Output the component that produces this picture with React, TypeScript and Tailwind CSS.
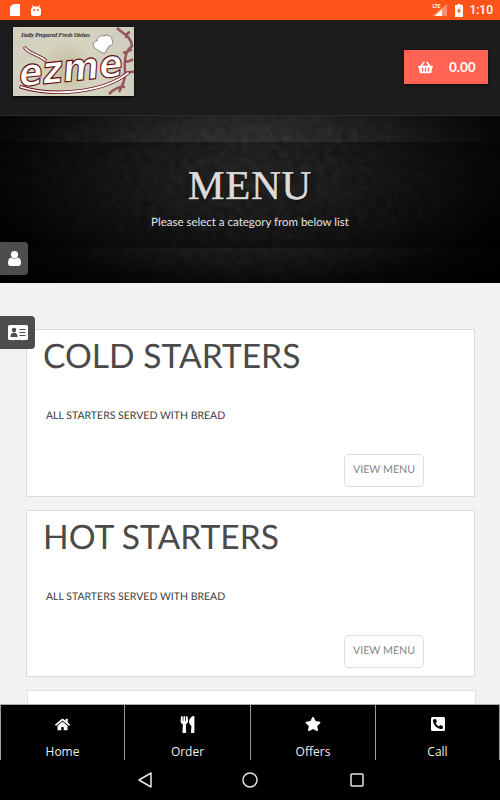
import { FaHome, FaPhoneSquareAlt, FaShoppingBasket, FaStar, FaUtensils } from 'react-icons/fa'
import type { IconType } from 'react-icons'

const navItems: { label: string; icon: IconType; size: string }[] = [
  { label: 'Home', icon: FaHome, size: 'text-[15px]' },
  { label: 'Order', icon: FaUtensils, size: 'text-[17px]' },
  { label: 'Offers', icon: FaStar, size: 'text-[16px]' },
  { label: 'Call', icon: FaPhoneSquareAlt, size: 'text-[16px]' },
]

function StatusBar() {
  return (
    <div className="h-5 shrink-0 bg-[#ff5419] flex items-center justify-between pl-[10px] pr-[7px] text-white">
      <div className="flex items-center gap-[11px]">
        <svg width="10" height="12" viewBox="0 0 10 12" fill="white">
          <path d="M3 0h6a1 1 0 0 1 1 1v10a1 1 0 0 1-1 1H1a1 1 0 0 1-1-1V3z" />
        </svg>
        <svg width="10" height="11" viewBox="0 0 10 11" fill="white">
          <path d="M1.500 0l1.300 1.500h4.400L8.500 0l.6.5L8 2c1.300.7 2 1.700 2 3v3.500A2.500 2.500 0 0 1 7.500 11h-5A2.500 2.500 0 0 1 0 8.500V5c0-1.300.7-2.300 2-3L.9.500z" />
          <circle cx="3.200" cy="5" r="1" fill="#ff5419" />
          <circle cx="6.800" cy="5" r="1" fill="#ff5419" />
        </svg>
      </div>
      <div className="flex items-center">
        <div className="relative w-[15px] h-[12px] mr-[8px]">
          <svg className="absolute inset-0" width="15" height="12" viewBox="0 0 15 12">
            <path d="M15 0v12H0z" fill="white" fillOpacity="0.35" />
            <path d="M10 5v7H3z" fill="white" />
          </svg>
          <span className="absolute left-0 top-[-1px] font-['Roboto',sans-serif] text-[5px] font-bold leading-[7px]">LTE</span>
        </div>
        <svg width="8" height="13" viewBox="0 0 8 13" className="mr-[6px]">
          <path d="M2.500 0h3v1H8v12H0V1h2.500z" fill="white" />
          <path d="M4.800 3L2 7.500h1.700L3.200 10.500 6 6H4.300z" fill="#ff5419" />
        </svg>
        <span className="font-['Roboto',sans-serif] text-[12px] font-medium leading-none">1:10</span>
      </div>
    </div>
  )
}

function Logo() {
  return (
    <div className="relative w-[121px] h-[69px] overflow-hidden bg-[radial-gradient(circle_at_45%_60%,#c2bb98_0%,#d5d2c0_35%,#cfcdbd_100%)] shadow-[0_1px_2px_rgba(0,0,0,0.8)]">
      <svg className="absolute inset-0" width="121" height="69" viewBox="0 0 121 69" fill="none">
        <path d="M104 1c6 6 14 8 15 18-6 4-8 12-7 24 1 8-2 14-6 22M117 5c-3 1-4 3-4 6M110 26c4-1 6-3 9-3M110 48c4-3 7-4 11-3M96 67c5-5 10-8 16-7M112 34c3 1 6 0 8-2" stroke="#96565b" strokeWidth="2.500" />
        <path d="M82 21c-3-2-2-7 2-7 0-4 4-6 7-5 3-2 8 0 8 4 2 3 0 6-3 6l-4 7c-2 1-8-3-10-5z" fill="white" stroke="#6e6e6e" strokeWidth="0.800" />
        <path d="M12 21c5 6 12 6 20 12" stroke="#6b1117" strokeWidth="3.500" strokeLinecap="round" />
        <path d="M12 21c5 6 12 6 20 12" stroke="white" strokeWidth="1.800" strokeLinecap="round" />
        <path d="M8 60C40 70 90 66 115 46" stroke="#6b1117" strokeWidth="3.500" strokeLinecap="round" />
        <path d="M8 60C40 70 90 66 115 46" stroke="white" strokeWidth="1.800" strokeLinecap="round" />
        <text x="6" y="54" fontFamily="'DejaVu Sans', sans-serif" fontStyle="italic" fontWeight="700" fontSize="38" fill="white" stroke="#6b1117" strokeWidth="1.200" textLength="104" lengthAdjust="spacingAndGlyphs" transform="rotate(-6 60 45)">ezme</text>
        <text x="8" y="10" fontFamily="'Liberation Serif', serif" fontStyle="italic" fontWeight="700" fontSize="6.500" fill="#333" textLength="69">Daily Prepared Fresh Dishes</text>
      </svg>
    </div>
  )
}

function Header() {
  return (
    <div className="h-[96px] shrink-0 bg-[#1c1c1c] border-b border-[#2c2c2c] flex justify-between pl-[13px] pr-[12px]">
      <div className="pt-[7px]">
        <Logo />
      </div>
      <div className="pt-[30px]">
        <div className="w-[84px] h-[34px] bg-[#ff6353] flex items-center pl-[14px] text-white shadow-[0_1px_2px_rgba(0,0,0,0.6)]">
          <FaShoppingBasket className="text-[15px]" />
          <span className="ml-[16px] font-['Lato',sans-serif] text-[13.500px] font-bold">0.00</span>
        </div>
      </div>
    </div>
  )
}

function Hero() {
  return (
    <div className="relative h-[167px] shrink-0 bg-[radial-gradient(ellipse_at_50%_30%,#2b2b2b_0%,#171717_42%,#040404_80%,#000_100%)] flex items-center overflow-hidden">
      <svg className="absolute inset-0 opacity-20 [mask-image:radial-gradient(ellipse_at_50%_40%,black_20%,transparent_75%)]" width="500" height="167">
        <filter id="grain">
          <feTurbulence type="fractalNoise" baseFrequency="0.12" numOctaves="4" />
          <feColorMatrix type="saturate" values="0" />
        </filter>
        <rect width="500" height="167" filter="url(#grain)" />
      </svg>
      <div className="relative w-full h-[106px] mt-[-9px] bg-black/40 text-center pt-[20px] [text-rendering:geometricPrecision]">
        <h1 className="font-['Liberation_Serif',serif] text-[41px] leading-[46px] text-[#dcdcdc] font-normal tracking-[0.8px] [-webkit-text-stroke:0.5px_#dcdcdc] [text-shadow:1px_1px_1px_#000]">MENU</h1>
        <p className="font-['Lato',sans-serif] text-[11.500px] leading-[18px] mt-[6px] text-[#e4e4e4]">Please select a category from below list</p>
      </div>
    </div>
  )
}

function MenuCard({ title }: { title: string }) {
  return (
    <div className="h-[167.500px] shrink-0 bg-white border border-[#dedbd2] font-['Lato',sans-serif] [text-rendering:geometricPrecision]">
      <h2 className="pl-[16px] pt-[6px] text-[33.600px] leading-[41px] text-[#4a4a4a]">{title}</h2>
      <p className="pl-[19px] mt-[32px] text-[10.500px] leading-[14px] text-[#3c3c3c]">ALL STARTERS SERVED WITH BREAD</p>
      <div className="flex justify-end pr-[50px] mt-[31px]">
        <div className="w-[80px] h-[33px] rounded-[5px] border border-[#dddddd] flex items-center justify-center text-[10.700px] text-[#868686]">VIEW MENU</div>
      </div>
    </div>
  )
}

function BottomNav() {
  return (
    <div className="h-[56px] shrink-0 bg-black border-t border-[#aaaaaa] grid grid-cols-[124px_126px_125px_125px]">
      {navItems.map(({ label, icon: Icon, size }, i) => (
        <div
          key={label}
          className={`flex flex-col items-center border-l border-[#999999] ${i === 3 ? 'border-r' : ''}`}
        >
          <div className="h-[38px] flex items-center text-white">
            <Icon className={size} />
          </div>
          <span className="mt-[1px] font-['Open_Sans',sans-serif] text-[12px] leading-[16px] text-[#eeeeee]">{label}</span>
        </div>
      ))}
    </div>
  )
}

function SystemNav() {
  return (
    <div className="h-[40px] shrink-0 bg-black flex items-center justify-center gap-[90px] pb-[1px] pl-[2px]">
      <svg width="14" height="16" viewBox="0 0 14 16" fill="none" stroke="#e6e6e6" strokeWidth="1.500">
        <path d="M13 1v14L1 8z" strokeLinejoin="round" />
      </svg>
      <svg width="16" height="16" viewBox="0 0 16 16" fill="none" stroke="#e6e6e6" strokeWidth="1.500">
        <circle cx="8" cy="8" r="7" />
      </svg>
      <svg className="ml-[2px]" width="14" height="14" viewBox="0 0 14 14" fill="none" stroke="#e6e6e6" strokeWidth="1.500">
        <rect x="1" y="1" width="12" height="12" rx="1" />
      </svg>
    </div>
  )
}

export default function App() {
  return (
    <div className="relative w-[500px] h-[800px] overflow-hidden flex flex-col bg-[#f2f2f2]">
      <StatusBar />
      <Header />
      <Hero />
      <main className="flex-1 min-h-0 overflow-hidden flex flex-col gap-[13px] pt-[46px] pl-[26px] pr-[25px]">
        <MenuCard title="COLD STARTERS" />
        <MenuCard title="HOT STARTERS" />
        <div className="h-[60px] shrink-0 ml-[1px] mr-[-1px] bg-white border border-[#e6e3da]" />
      </main>
      <BottomNav />
      <SystemNav />

      <div className="absolute left-0 top-[242px] w-[28px] h-[33px] bg-[#4d4d4d] rounded-r-[4px] flex items-center justify-center text-white">
        <svg width="13" height="15" viewBox="0 0 13 15" fill="white">
          <circle cx="6.500" cy="3.600" r="3.600" />
          <path d="M3 6.500c1.800 1.500 5.200 1.500 7 0 2 .6 3 2.500 3 5.500 0 2-1 3-2.500 3h-8C1 15 0 14 0 12c0-3 1-4.900 3-5.500z" />
        </svg>
      </div>
      <div className="absolute left-0 top-[316px] w-[35px] h-[33px] bg-[#4d4d4d] rounded-r-[4px] flex items-center justify-center pl-[1px]">
        <svg width="20" height="16" viewBox="0 0 20 16">
          <path d="M1.500 0h17A1.500 1.500 0 0 1 20 1.500v12a1.500 1.500 0 0 1-1.500 1.500H15l-.5 1-.5-1H6l-.5 1-.5-1H1.500A1.500 1.500 0 0 1 0 13.500v-12A1.500 1.500 0 0 1 1.500 0z" fill="white" />
          <circle cx="6" cy="5" r="2.200" fill="#4d4d4d" />
          <path d="M2.500 12c0-3 1-4.300 3.500-4.300S9.500 9 9.500 12z" fill="#4d4d4d" />
          <path d="M11.500 4.500h6M11.500 7.500h6M11.500 10.500h6" stroke="#4d4d4d" strokeWidth="1.200" />
        </svg>
      </div>
    </div>
  )
}
